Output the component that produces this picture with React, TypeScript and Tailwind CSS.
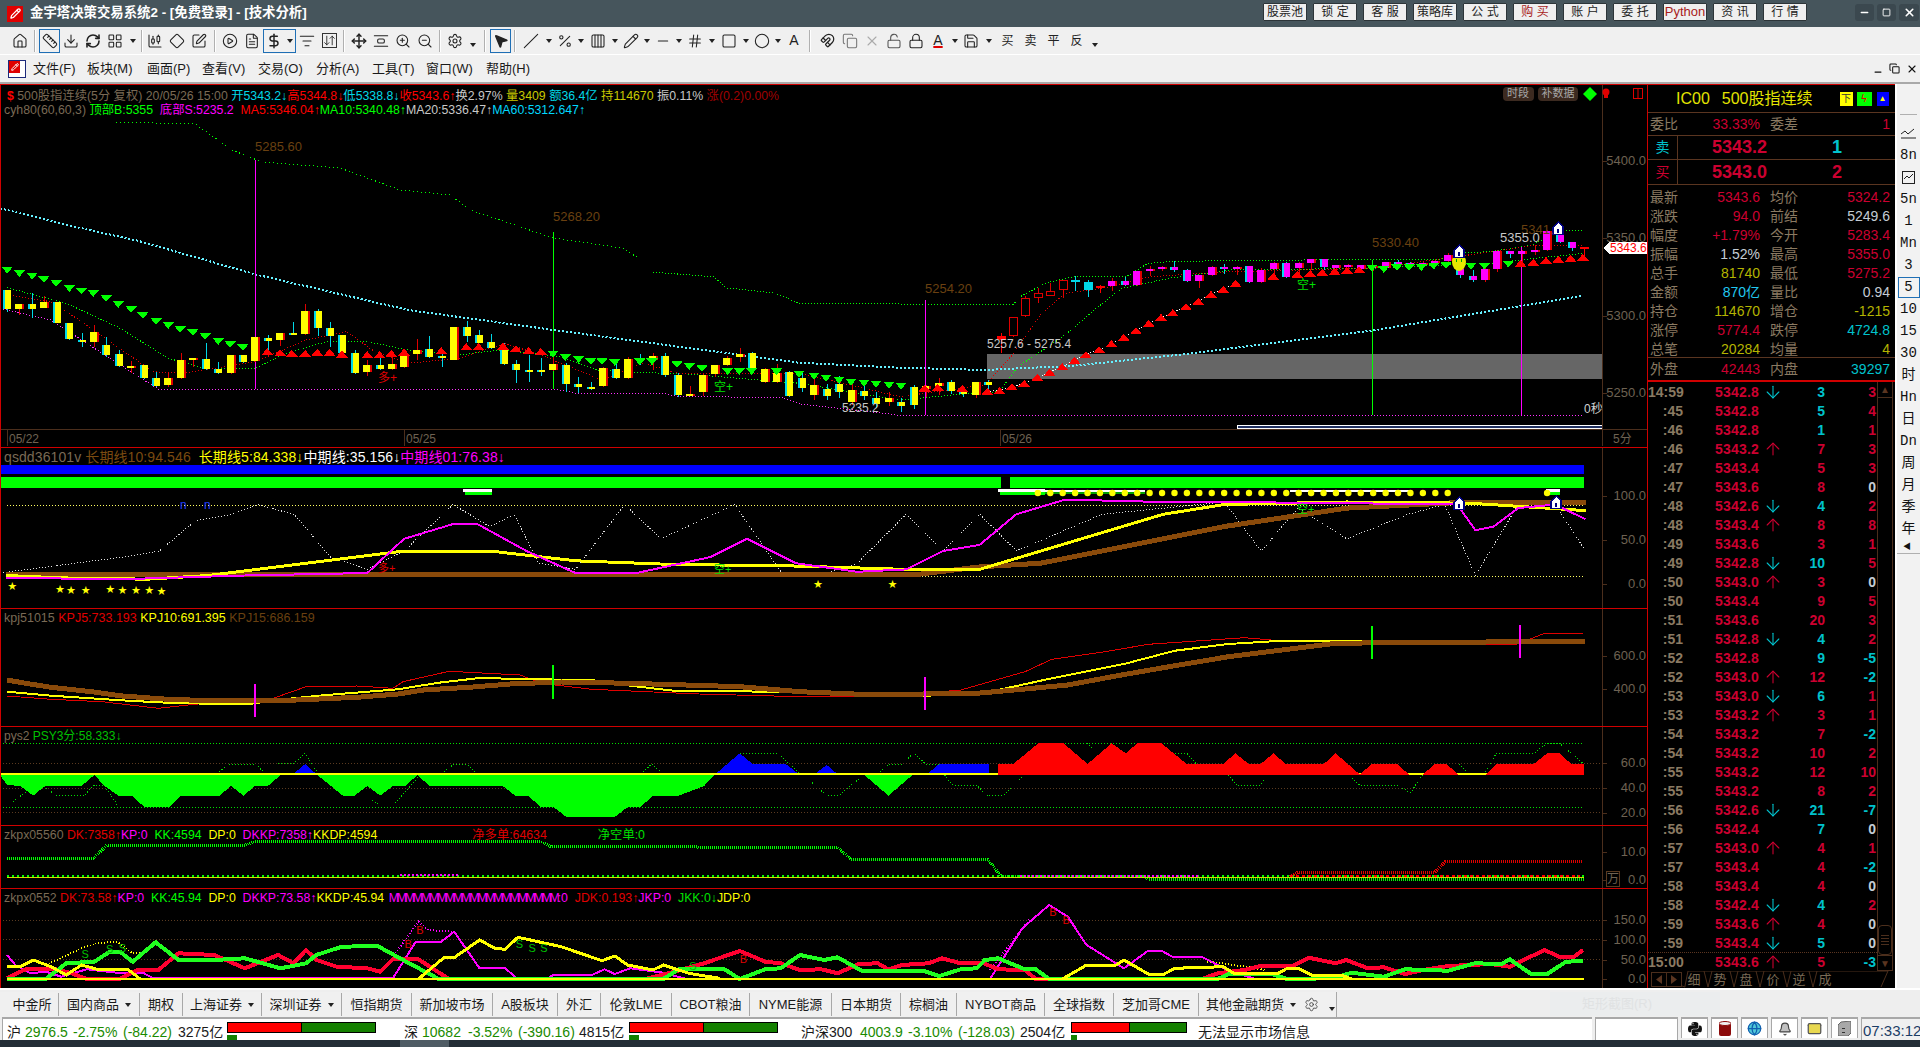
import React from "react";
import {
  House, Ruler, Download, RefreshCw, LayoutGrid, CandlestickChart, SquarePen, CirclePlay, FileText, DollarSign,
  ListFilter, ArrowDownUp, Move, ZoomIn, ZoomOut, Settings, Slash, Percent, Columns4, Hash, Square, Circle, Magnet,
  Copy, X, LockOpen, Lock, Save, Minus, ArrowUp, ArrowDown, MousePointer2, Pencil, AlignVerticalSpaceAround, Diamond, Bell, Mail, Globe,
} from "lucide-react";
import { FaPython } from "react-icons/fa";

type P = number[][];
const pl = (p: P) => p.map((a) => `${a[0].toFixed(1)},${a[1].toFixed(1)}`).join(" ");
const z8 = (a: P): P => a.map(([x, y]) => [x / 1.96, 240 + y / 3]);
const z9 = (a: P): P => a.map(([x, y]) => [900 + x / 2.119, 200 + y / 3]);
const z10 = (a: P): P => a.map(([x, y]) => [x / 1.96, 600 + y / 3]);
const z11 = (a: P): P => a.map(([x, y]) => [800 + x / 1.867, 600 + y / 3]);
const ov = (a: P): P => a.map(([x, y]) => [x / 0.8167, y / 0.8167]);
const cx = (i: number) => 7 + 12.42 * i;

type C = [number, number, number, number, string];
const c8: C[] = [
  [150,207,150,215,"c"],[192,207,192,225,"r"],[192,207,160,235,"c"],[186,203,168,205,"r"],[186,248,186,250,"c"],[249,297,249,300,"c"],[300,305,278,322,"c"],[276,306,255,322,"r"],
  [315,344,292,352,"c"],[342,378,330,382,"c"],[378,381,362,398,"r"],[375,414,375,418,"c"],[414,437,396,440,"c"],[414,435,395,440,"r"],[360,414,340,416,"r"],[354,360,354,380,"r"],
  [357,387,308,390,"c"],[387,399,366,402,"c"],[345,399,345,402,"r"],[345,366,345,370,"c"],[291,362,291,365,"r"],[294,303,285,330,"c"],[279,300,279,318,"r"],[279,284,246,285,"c"],
  [213,282,192,285,"r"],[213,264,207,288,"c"],[264,288,246,320,"c"],[285,339,285,345,"c"],[339,399,330,402,"c"],[375,396,360,408,"r"],[375,387,350,390,"c"],[372,387,345,390,"r"],
  [342,381,330,385,"r"],[330,342,296,360,"r"],[327,351,288,355,"c"],[348,354,330,380,"c"],[261,360,261,360,"r"],[261,288,243,306,"c"],[285,309,270,310,"c"],[306,324,282,326,"c"],
  [324,372,310,375,"c"],[372,390,360,428,"c"],[390,393,345,425,"c"],[390,396,354,408,"c"],[372,390,336,392,"r"],[375,432,370,455,"c"],[432,441,410,460,"c"],[441,445,425,450,"c"],
  [384,438,380,440,"r"],[387,414,365,416,"c"],[357,414,350,416,"r"],[357,363,342,375,"c"],[348,360,338,390,"r"],[348,405,338,412,"c"],[405,465,400,470,"c"],[462,465,438,468,"r"],
  [405,456,400,468,"r"],[375,402,375,410,"r"],[354,375,348,378,"r"],[342,351,324,365,"r"],[339,390,335,395,"c"],[387,426,385,430,"r"],[399,426,372,430,"r"],[396,468,393,472,"c"],
];
const cMid: number[][] = [[378,388,372,392],[385,395,378,400],[389,396,384,400],[384,392,376,398],[390,402,384,405],[391,396,386,400],[398,404,392,408],[398,402,392,406],[402,406,398,412]];
const c9: C[] = [
  [560,615,555,628,"c"],[558,567,555,590,"r"],[549,558,535,585,"r"],[546,573,540,582,"c"],[573,582,560,590,"c"],[546,585,546,595,"r"],[546,555,540,570,"c"],
  [408,420,400,458,"R"],[351,407,350,410,"h"],[295,347,287,352,"h"],[280,293,265,310,"h"],[274,285,248,285,"h"],[240,268,240,293,"h"],[240,245,228,272,"C"],[246,269,240,290,"C"],[258,262,255,280,"R"],
  [243,258,235,272,"m"],[243,255,230,258,"n"],[213,255,213,258,"m"],[207,213,197,228,"m"],[201,207,198,212,"m"],[201,210,183,215,"n"],[210,243,207,245,"n"],[225,243,225,265,"m"],[201,225,198,228,"m"],[201,207,192,222,"n"],[201,207,198,225,"m"],
  [198,246,198,250,"n"],[210,245,205,250,"m"],[189,207,185,225,"m"],[189,231,185,235,"n"],[189,204,185,225,"m"],[177,189,177,210,"m"],[177,201,177,210,"n"],[195,204,195,222,"m"],[195,201,192,220,"m"],[195,207,195,215,"m"],[198,204,196,212,"m"],
  [186,204,186,210,"m"],[186,190,180,205,"n"],[189,192,186,205,"n"],[189,192,186,200,"m"],[183,189,180,200,"m"],[165,183,160,190,"m"],[207,225,150,233,"n"],[228,240,210,245,"n"],[207,240,192,245,"m"],[153,207,153,215,"m"],
  [153,162,153,175,"n"],[153,162,150,185,"m"],[150,153,135,165,"m"],[93,150,90,152,"m"],[105,126,80,130,"n"],[126,144,126,152,"n"],[142,145,140,168,"R"],
];

function Candle({ i, t, b, wt, wb, k }: { i: number; t: number; b: number; wt: number; wb: number; k: string }) {
  const x = Math.round(cx(i));
  const fill: Record<string, string> = { c: "#ffff00", r: "#ffff00", h: "#000", R: "#ff0000", C: "#00d8e8", m: "#ff00ff", n: "#ff00ff" };
  const edge: Record<string, string> = { c: "#00d8e8", r: "#e00000", h: "#e00000", R: "#ff0000", C: "#00d8e8", m: "#e00000", n: "#00d8e8" };
  const h = Math.max(2, b - t);
  return (
    <g>
      <line x1={x} x2={x} y1={wt} y2={wb} stroke={edge[k]} />
      <rect x={x - 4} y={t} width={8} height={h} fill={fill[k]} />
      {k === "h" ? <rect x={x - 4} y={t} width={8} height={h} fill="#000" stroke="#e00000" /> : <rect x={k === "c" || k === "n" ? x - 4 : x + 3} y={t} width={1.5} height={h} fill={edge[k]} />}
    </g>
  );
}

const Dot = ({ p, c, w = 1, d = "1 2" }: { p: P; c: string; w?: number; d?: string }) => <polyline points={pl(p)} fill="none" stroke={c} strokeWidth={w} strokeDasharray={d} />;
const Line = ({ p, c, w = 1 }: { p: P; c: string; w?: number }) => <polyline points={pl(p)} fill="none" stroke={c} strokeWidth={w} />;
const Poly = ({ p, c }: { p: P; c: string }) => <polygon points={pl(p)} fill={c} />;
const Lbl = ({ x, y, t, c = "#6e6252", s = 13, a = "start" }: { x: number; y: number; t: string; c?: string; s?: number; a?: "start" | "middle" | "end" }) => (
  <text x={x} y={y + s * 0.3} fill={c} fontSize={s} textAnchor={a}>{t}</text>
);
const Tri = ({ x, y, c, up }: { x: number; y: number; c: string; up?: boolean }) => (
  <polygon points={up ? `${x - 6},${y + 3.5} ${x + 6},${y + 3.5} ${x},${y - 3.5}` : `${x - 6},${y - 3.5} ${x + 6},${y - 3.5} ${x},${y + 3.5}`} fill={c} />
);
const House2 = ({ x, y }: { x: number; y: number }) => (
  <g>
    <polygon points={`${x},${y - 8} ${x + 6},${y - 2} ${x + 6},${y + 6} ${x - 6},${y + 6} ${x - 6},${y - 2}`} fill="#000080" />
    <polygon points={`${x},${y - 6} ${x + 4},${y - 2} ${x + 4},${y + 5} ${x - 4},${y + 5} ${x - 4},${y - 2}`} fill="#ffffff" />
    <rect x={x - 1} y={y} width={2} height={4} fill="#000080" />
  </g>
);
const Axis = ({ top, h, ticks }: { top: number; h: number; ticks: [string, number][] }) => (
  <g>
    <line x1={1602.5} x2={1602.5} y1={top} y2={top + h} stroke="#4b2e1c" />
    {ticks.map(([t, y]) => (
      <g key={t}>
        <line x1={1602} x2={1607} y1={y} y2={y} stroke="#4b2e1c" />
        <Lbl x={1646} y={y} t={t} a="end" />
      </g>
    ))}
  </g>
);

const g8 = [[14,90],[38,100],[63,108],[86,118],[110,130],[136,145],[160,153],[183,160],[208,175],[232,193],[257,208],[280,226],[306,244],[330,256],[353,268],[378,277],[402,289],[428,304],[451,313],[476,322],[1084,342],[1108,352],[1134,358],[1158,364],[1180,364],[1205,367],[1254,365],[1278,365],[1327,373],[1351,379],[1376,385],[1426,394],[1449,394],[1473,394],[1522,395],[1566,402]];
const r8 = [[524,335],[549,338],[572,340],[598,340],[622,337],[646,337],[670,342],[720,344],[744,344],[767,340],[792,336],[865,332],[914,320],[938,320],[986,318],[1011,326],[1036,332],[1060,334]];
const gMid = [[814,376],[826,378],[839,380],[851,382],[864,383],[876,384],[889,385],[901,386]];
const r9 = [[52,564],[80,562],[132,565],[185,574],[211,572],[237,560],[263,550],[291,532],[317,517],[344,500],[370,481],[394,464],[422,449],[448,431],[474,412],[500,392],[527,370],[553,352],[578,338],[606,320],[632,304],[659,283],[685,268],[711,250],[791,229],[842,223],[869,220],[895,217],[921,214],[947,211],[973,209]];
const g9 = [[1000,204],[1025,208],[1053,202],[1079,202],[1105,202],[1131,198],[1157,196],[1210,198],[1238,198],[1289,192]];
const r9b = [[1315,190],[1342,187],[1369,181],[1395,178],[1421,175],[1447,172]];

function MainChart() {
  return (
    <svg width={1646} height={362} viewBox="1 85 1646 362" className="block" shapeRendering="crispEdges">
      <rect x={987} y={354} width={615} height={25} fill="#666666" />
      <Dot p={[...ov([[0,170],[60,185],[110,196]]), ...z8([[265,0],[500,103],[800,210],[1085,270],[1565,368]]), ...z9([[0,503],[180,510],[370,497],[600,463],[1000,392],[1447,287]])]} c="#66f0ff" w={2} d="2 2" />
      <Dot p={[[116,122],[195,124],[232,150],[262,162],[340,168],[400,190],[450,195],[470,210],[500,220],[553,238],[622,248],[640,259]]} c="#00ff00" d="1 3" />
      <Dot p={[[653,272],[714,277],[727,288],[775,293],[798,303],[900,304],...z9([[240,313],[255,290],[310,248],[370,230],[480,230],[525,190],[580,184],[1000,178],[1140,180],[1180,160],[1250,155],[1340,135],[1400,92],[1447,92]])]} c="#00ff00" />
      <Dot p={[...z8([[14,143],[130,190],[230,260],[330,355],[400,385],[500,385],[560,340],[640,305],[720,305],[800,330],[900,345],[980,330],[1100,350],[1170,390],[1250,398],[1330,400],[1568,430]]), ...z9([[0,600],[150,580],[210,575],[250,500],[345,410],[420,320],[470,265],[570,235],[700,210],[1000,205],[1150,195],[1250,190],[1447,160]])]} c="#00ff00" />
      <Dot p={[...z8([[14,165],[100,185],[150,235],[230,320],[300,395],[360,400],[500,365],[600,300],[680,275],[730,330],[800,370],[900,355],[990,310],[1060,345],[1180,420],[1260,370],[1330,400],[1400,400],[1568,400]]), ...z9([[0,590],[180,555],[235,470],[300,340],[350,280],[430,265],[530,230],[700,215],[1000,205],[1180,170],[1350,135],[1447,135]])]} c="#e00000" />
      <Dot p={[...z8([[0,205],[100,240],[130,270],[200,340],[310,447],[1085,447],[1130,460],[1300,460],[1330,470],[1530,472],[1568,492]]), ...z9([[0,646],[1447,646]])]} c="#ff30ff" />
      <line x1={255} x2={255} y1={160} y2={389} stroke="#ff00ff" />
      <line x1={553} x2={553} y1={232} y2={389} stroke="#00ff00" />
      <line x1={925} x2={925} y1={300} y2={415} stroke="#ff00ff" />
      <line x1={1372} x2={1372} y1={260} y2={415} stroke="#00ff00" />
      <line x1={1521} x2={1521} y1={247} y2={415} stroke="#ff00ff" />
      {c8.map((c, i) => <Candle key={i} i={i} t={240 + c[0] / 3} b={240 + c[1] / 3} wt={240 + c[2] / 3} wb={240 + c[3] / 3} k={c[4]} />)}
      {cMid.map((c, i) => <Candle key={i} i={64 + i} t={c[0]} b={c[1]} wt={c[2]} wb={c[3]} k={i % 3 === 1 ? "r" : "c"} />)}
      {c9.map((c, i) => <Candle key={i} i={73 + i} t={200 + c[0] / 3} b={200 + c[1] / 3} wt={200 + c[2] / 3} wb={200 + c[3] / 3} k={c[4]} />)}
      <Dot p={z9(r9.slice(3, 24))} c="#ffffff" />
      {z8(g8).map((p, i) => <Tri key={i} x={p[0]} y={p[1]} c="#00ff00" />)}
      {gMid.map((p, i) => <Tri key={i} x={p[0]} y={p[1]} c="#00ff00" />)}
      {z8(r8).map((p, i) => <Tri key={i} x={p[0]} y={p[1]} c="#ff0000" up />)}
      {z9(r9).map((p, i) => <Tri key={i} x={p[0]} y={p[1]} c="#ff0000" up />)}
      {z9(g9).map((p, i) => <Tri key={i} x={p[0]} y={p[1]} c="#00ff00" />)}
      {z9(r9b).map((p, i) => <Tri key={i} x={p[0]} y={p[1]} c="#ff0000" up />)}
      <ellipse cx={1459} cy={262} rx={7} ry={9} fill="#e8e800" shapeRendering="auto" />
      <rect x={1456} y={259} width={1} height={3} fill="#00a000" /><rect x={1461} y={259} width={1} height={3} fill="#00a000" />
      <House2 x={1459} y={252} /><House2 x={1558} y={229} />
      <g shapeRendering="auto">
        <Lbl x={255} y={147} t="5285.60" c="#6a4010" s={13} />
        <Lbl x={553} y={217} t="5268.20" c="#6a4010" s={13} />
        <Lbl x={925} y={289} t="5254.20" c="#6a4010" s={13} />
        <Lbl x={1372} y={243} t="5330.40" c="#6a4010" s={13} />
        <Lbl x={1521} y={230} t="5341." c="#6a4010" s={13} />
        <Lbl x={1500} y={238} t="5355.0" c="#c8c8c8" s={13} />
        <Lbl x={987} y={344} t="5257.6 - 5275.4" c="#c8c8c8" s={12} />
        <Lbl x={842} y={408} t="5235.2" c="#c8c8c8" s={12} />
        <Lbl x={1584} y={409} t="0秒" c="#d0d0d0" s={12} />
        <Lbl x={378} y={378} t="多+" c="#e00000" s={12} />
        <Lbl x={714} y={387} t="空+" c="#00e000" s={12} />
        <Lbl x={1297} y={285} t="空+" c="#00e000" s={12} />
      </g>
      <rect x={1237} y={425} width={365} height={3} fill="#203060" stroke="#ffffff" />
      <Axis top={85} h={361} ticks={[["5400.0", 161], ["5350.0", 238], ["5300.0", 316], ["5250.0", 393]]} />
      <polygon points="1603,248 1609,242 1647,242 1647,254 1609,254" fill="#ffffff" />
      <g shapeRendering="auto">
        <Lbl x={1610} y={248} t="5343.6" c="#ff0000" s={12} />
        <rect x={1503} y={87} width={31} height={14} rx={4} fill="#3c2a20" />
        <Lbl x={1518} y={94} t="时段" c="#a8a8a8" s={11} a="middle" />
        <rect x={1538} y={87} width={40} height={14} rx={4} fill="#3c2a20" />
        <Lbl x={1558} y={94} t="补数据" c="#a8a8a8" s={11} a="middle" />
        <polygon points="1590,87 1597,94 1590,101 1583,94" fill="#00ff00" />
        <circle cx={1606} cy={92} r={3.5} fill="#e00000" />
        <rect x={1604} y={95} width={4} height={3} fill="#e00000" />
        <rect x={1633.5} y={88.5} width={9} height={10} fill="none" stroke="#e00000" />
        <line x1={1638} x2={1638} y1={88} y2={98} stroke="#e00000" />
      </g>
      <line x1={0} x2={1647} y1={429.5} y2={429.5} stroke="#4b2e1c" />
      <line x1={7.5} x2={7.5} y1={430} y2={446} stroke="#4b2e1c" />
      <line x1={404.5} x2={404.5} y1={430} y2={446} stroke="#4b2e1c" />
      <line x1={1000.5} x2={1000.5} y1={430} y2={446} stroke="#4b2e1c" />
      <g shapeRendering="auto">
        <Lbl x={9} y={439} t="05/22" s={12} />
        <Lbl x={406} y={439} t="05/25" s={12} />
        <Lbl x={1002} y={439} t="05/26" s={12} />
        <Lbl x={1613} y={439} t="5分" s={12} />
      </g>
    </svg>
  );
}

function Pane2() {
  const dotsFull = [83,84,85,86,87,88,89,90,91,92,93,94,95,96,97,98,99,100,101,102,103,104,105,106,107,108,109,110,111,112,113,114,115,116,124];
  return (
    <svg width={1646} height={160} viewBox="1 448 1646 160" className="block" shapeRendering="crispEdges">
      <rect x={0} y={465} width={1584} height={9} fill="#0000ff" />
      <rect x={0} y={477} width={1001} height={11} fill="#00ff00" />
      <rect x={1010} y={477} width={574} height={11} fill="#00ff00" />
      <rect x={463} y={489} width={29} height={3} fill="#ffffff" /><rect x={465} y={492} width={27} height={3} fill="#00ff00" />
      <rect x={998} y={489} width={47} height={3} fill="#ffffff" /><rect x={1000} y={492} width={45} height={3} fill="#00ff00" />
      <rect x={1045} y={490} width={100} height={2} fill="#ffffff" /><rect x={1045} y={492} width={100} height={2} fill="#00a000" />
      <rect x={1290} y={490} width={120} height={2} fill="#ffffff" />
      <rect x={1546} y={489} width={14} height={3} fill="#ffffff" /><rect x={1546} y={492} width={14} height={3} fill="#00ff00" />
      <g shapeRendering="auto">{dotsFull.map((i) => <circle key={i} cx={cx(i)} cy={493} r={3.2} fill="#ffff00" />)}</g>
      <Dot p={[[7,505.5],[1584,505.5]]} c="#ffff60" />
      <Dot p={[[7,576.5],[1584,576.5]]} c="#ffff60" />
      <Dot p={ov([[0,468],[100,455],[130,450],[160,425],[190,420],[210,412],[240,420],[270,455],[300,465],[330,450],[370,412],[400,430],[420,420],[440,460],[470,465],[510,412],[540,440],[600,412],[640,470],[670,470],[700,460],[740,420],[770,450],[800,420],[830,450],[900,420],[1000,410],[1030,450],[1060,415],[1100,440],[1150,420],[1180,412],[1205,470],[1240,412],[1270,412],[1295,450]])} c="#e0e0e0" />
      <Line p={ov([[5,469],[750,469],[800,463],[850,460],[900,450],[1000,430],[1100,415],[1200,410],[1295,410]])} c="#8a4a0a" w={5} />
      <Line p={ov([[5,470],[50,472],[120,473],[170,470],[250,460],[330,450],[400,450],[470,458],[550,461],[640,462],[740,465],[800,465],[850,450],[950,420],[1000,412],[1100,410],[1200,411],[1295,417]])} c="#ffff00" w={3} />
      <Line p={ov([[5,472],[100,473],[200,470],[300,468],[330,440],[370,428],[390,428],[430,450],[470,468],[520,468],[580,455],[610,440],[650,460],[700,467],[740,465],[770,450],[800,445],[830,420],[870,408],[950,410],[1000,410],[1100,411],[1190,412],[1205,433],[1220,430],[1240,415],[1270,412],[1295,424]])} c="#ff00ff" w={2} />
      <House2 x={1459} y={504} /><House2 x={1556} y={503} />
      <g shapeRendering="auto">
        {ov([[10,479],[49,481],[58,482],[70,482],[90,481],[100,482],[111,482],[122,482],[132,483],[668,477],[729,477]]).map((p, i) => <Lbl key={i} x={p[0]} y={p[1]} t="★" c="#ffff00" s={9} a="middle" />)}
        <Lbl x={180} y={505} t="n" c="#2040ff" s={12} />
        <Lbl x={204} y={505} t="n" c="#2040ff" s={12} />
        <Lbl x={378} y={569} t="多+" c="#e00000" s={11} />
        <Lbl x={714} y={570} t="空+" c="#00e000" s={11} />
        <Lbl x={1297} y={510} t="空+" c="#00e000" s={11} />
      </g>
      <Axis top={447} h={161} ticks={[["100.0", 496], ["50.0", 540], ["0.0", 584]]} />
    </svg>
  );
}

function Pane3() {
  return (
    <svg width={1646} height={117} viewBox="1 609 1646 117" className="block" shapeRendering="crispEdges">
      <Line p={[...z10([[14,288],[100,298],[200,305],[310,325],[400,310],[530,298],[600,260],[700,258],[770,265],[790,245],[880,214],[1020,225],[1060,250],[1160,268],[1370,282],[1568,290]]), ...z11([[130,290],[170,288],[300,270],[420,215],[470,178],[570,155],[650,133],[830,113],[880,120],[1100,125],[1200,135],[1340,132],[1390,100],[1462,100]])]} c="#e00000" />
      <Line p={[...z10([[14,275],[100,287],[250,302],[350,310],[490,312],[540,300],[640,285],[780,268],[860,248],[940,234],[1050,238],[1160,240],[1240,258],[1320,272],[1568,276]]), ...z11([[240,287],[370,270],[470,235],[610,190],[700,152],[800,132],[900,122],[1115,122],[1375,130]])]} c="#ffff00" w={2} />
      <Line p={[...z10([[14,240],[50,250],[100,262],[180,275],[240,288],[330,298],[430,303],[550,302],[700,292],[780,282],[830,270],[920,262],[1000,252],[1100,246],[1180,248],[1300,253],[1450,260],[1568,275]]), ...z11([[100,282],[230,282],[330,280],[400,270],[500,255],[600,225],[700,197],[800,170],[900,150],[1000,130],[1100,128],[1465,124]])]} c="#8a4a0a" w={5} />
      <line x1={255} x2={255} y1={684} y2={717} stroke="#ff00ff" strokeWidth={2} />
      <line x1={553} x2={553} y1={665} y2={699} stroke="#00ff00" strokeWidth={2} />
      <line x1={925} x2={925} y1={677} y2={710} stroke="#ff00ff" strokeWidth={2} />
      <line x1={1372} x2={1372} y1={626} y2={659} stroke="#00ff00" strokeWidth={2} />
      <line x1={1520} x2={1520} y1={625} y2={658} stroke="#ff00ff" strokeWidth={2} />
      <Axis top={608} h={118} ticks={[["600.0", 656], ["400.0", 689]]} />
    </svg>
  );
}

function Pane4() {
  return (
    <svg width={1646} height={98} viewBox="1 727 1646 98" className="block" shapeRendering="crispEdges">
      {[763, 788, 812].map((y) => <Dot key={y} p={[[0,y],[1602,y]]} c="#5a3a20" />)}
      <Dot p={[[0,743],[1584,743]]} c="#00e000" />
      <Dot p={[[0,807],[1584,807]]} c="#00e000" />
      {[
        z10([[25,605],[65,560],[88,560],[110,587],[165,587],[185,555],[205,558],[230,615]]),
        z10([[430,515],[450,492],[500,492],[520,520]]),
        z10([[545,492],[575,490],[598,460],[625,525]]),
        z10([[730,600],[740,612]]),
        z10([[775,610],[820,530]]),
        z10([[870,515],[890,492],[915,492],[930,515]]),
        z10([[1260,515],[1278,492],[1295,515]]),
        z10([[1450,460],[1525,460],[1568,520]]),
        z11([[10,530],[50,587],[72,587],[115,530]]),
        z11([[150,515],[165,492],[190,492],[212,460],[235,492],[260,492]]),
        z11([[270,525],[285,556],[330,556],[350,587],[380,587],[415,530]]),
        z11([[535,430],[545,445]]),
        z11([[695,460],[722,460],[740,492]]),
        z11([[800,525],[815,556],[860,556],[870,530]]),
        z11([[1030,535],[1045,556],[1115,556],[1140,578],[1162,525]]),
        z11([[1230,492],[1245,515]]),
        z11([[1280,515],[1300,460],[1370,460],[1395,430],[1418,430],[1463,492]]),
      ].map((p, i) => <Dot key={i} p={p} c="#00e000" />)}
      <Poly c="#00ff00" p={z10([[0,525],[14,555],[40,558],[65,587],[88,558],[160,558],[185,525],[205,558],[232,587],[258,587],[283,621],[333,621],[355,587],[430,587],[453,558],[477,587],[500,558],[525,558],[550,525]])} />
      <Poly c="#0000ff" p={z10([[550,525],[575,522],[598,492],[622,525]])} />
      <Poly c="#00ff00" p={z10([[622,525],[672,587],[695,587],[720,558],[745,587],[770,558],[795,558],[818,525],[842,558],[985,558],[1010,587],[1035,587],[1060,621],[1085,621],[1110,651],[1205,651],[1230,621],[1255,621],[1280,587],[1330,587],[1380,558],[1400,525]])} />
      <Poly c="#0000ff" p={z10([[1400,525],[1450,460],[1475,492],[1540,492],[1568,525]])} />
      <Poly c="#0000ff" p={z11([[25,525],[50,495],[72,525]])} />
      <Poly c="#00ff00" p={z11([[118,522],[212,522],[165,587]])} />
      <Poly c="#0000ff" p={z11([[235,525],[260,492],[352,492],[352,525]])} />
      <line x1={0} x2={1584} y1={774} y2={774} stroke="#ffff00" strokeWidth={2} />
      <Poly c="#ff0000" p={z11([[370,525],[370,492],[398,492],[445,430],[492,430],[537,492],[582,430],[608,460],[630,430],[675,430],[722,492],[790,492],[813,460],[838,492],[860,492],[884,460],[907,492],[978,492],[1000,460],[1045,523],[1068,492],[1115,492],[1138,525]])} />
      <Poly c="#ff0000" p={z11([[1162,525],[1185,492],[1207,492],[1230,525]])} />
      <Poly c="#ff0000" p={z11([[1280,525],[1300,492],[1370,492],[1395,460],[1418,460],[1440,492],[1463,492],[1463,525]])} />
      <Axis top={726} h={99} ticks={[["60.0", 763], ["40.0", 788], ["20.0", 813]]} />
    </svg>
  );
}

function Pane5() {
  return (
    <svg width={1646} height={62} viewBox="1 826 1646 62" className="block" shapeRendering="crispEdges">
      <Dot p={[...z10([[14,775],[183,775],[210,735],[480,735],[500,725],[1060,725],[1080,740],[1365,740],[1370,743],[1568,743]]), ...z11([[70,742],[95,777],[350,777],[375,828],[640,830],[650,838],[1465,838]])]} c="#00ff00" w={3} d="1 1" />
      <Dot p={z11([[915,830],[930,817],[1185,817],[1205,785],[1462,785]])} c="#e00000" w={3} d="1 1" />
      <Line p={[[7,877],[1584,877]]} c="#d8d800" />
      <Dot p={[[7,876],[1584,876]]} c="#00ff00" w={2} d="2 3" />
      <Dot p={[[400,875],[460,875]]} c="#ff00ff" w={2} d="2 2" />
      <Dot p={[[1020,876],[1200,876]]} c="#ff00ff" w={2} d="2 2" />
      <Dot p={[[1290,876],[1580,876]]} c="#ff0000" w={2} d="3 3" />
      <Axis top={825} h={63} ticks={[["10.0", 852], ["0.0", 880]]} />
      <rect x={1606.5} y={871.5} width={13} height={15} fill="none" stroke="#5a3a20" />
      <g shapeRendering="auto"><Lbl x={1613} y={879} t="万" s={12} a="middle" /></g>
    </svg>
  );
}

function Pane6() {
  return (
    <svg width={1646} height={99} viewBox="1 889 1646 99" className="block" shapeRendering="crispEdges">
      {[920, 939, 959].map((y) => <Dot key={y} p={[[0,y],[1602,y]]} c="#5a3a20" />)}
      <Dot p={z10([[775,1060],[820,965],[840,990],[890,995]])} c="#ff00ff" w={2} d="1 2" />
      <Dot p={z11([[355,1110],[430,955]])} c="#ff00ff" w={2} d="1 2" />
      <Dot p={z10([[90,1095],[160,1045],[190,1030],[230,1025],[260,1060],[280,1060]])} c="#ffff00" w={2} d="1 2" />
      <Dot p={z11([[760,1085],[790,1090],[870,1110]])} c="#ffff00" w={2} d="1 2" />
      <Line p={z10([[14,1065],[30,1095],[60,1120],[90,1115],[120,1130],[170,1108],[240,1120],[280,1118],[300,1135],[770,1135],[815,1025],[865,1025],[890,995],[940,1105],[990,1105],[1015,1137],[1070,1137],[1085,1125],[1160,1125],[1185,1108],[1205,1122],[1235,1105],[1300,1118],[1345,1137],[1568,1137]])} c="#ff00ff" w={2} />
      <Line p={z11([[355,1137],[415,985],[465,915],[500,950],[535,1035],[605,1105],[650,1052],[675,1052],[695,1070],[750,1070],[800,1112],[850,1137],[900,1137]])} c="#ff00ff" w={2} />
      <Line p={[...z10([[14,1135],[50,1108],[110,1108],[140,1120],[170,1137],[235,1137],[270,1110],[310,1110],[350,1060],[420,1065],[480,1105],[545,1065],[575,1090],[600,1050],[620,1080],[660,1100],[720,1105],[745,1115],[770,1078],[820,1078],[880,1137],[1265,1137],[1310,1120],[1380,1090],[1450,1053],[1500,1085],[1530,1090],[1568,1110]]), ...z11([[40,1108],[70,1120],[110,1092],[145,1090],[165,1108],[190,1095],[240,1090],[265,1075],[300,1090],[340,1088],[370,1108],[420,1110],[440,1137],[750,1137],[780,1120],[830,1110],[860,1098],[920,1098],[950,1073],[1000,1090],[1020,1080],[1060,1105],[1090,1102],[1130,1122],[1170,1108],[1210,1098],[1290,1092],[1325,1100],[1390,1050],[1420,1072],[1445,1070],[1462,1050]])]} c="#ff0030" w={4} />
      <Line p={[...z10([[14,1137],[90,1137],[130,1090],[185,1085],[215,1055],[235,1055],[260,1085],[305,1027],[350,1080],[420,1080],[480,1075],[550,1105],[600,1090],[620,1065],[670,1040],[740,1038],[790,1080],[860,1137],[1300,1137],[1330,1108],[1420,1108],[1450,1137],[1500,1108],[1530,1105],[1568,1065]]), ...z11([[45,1080],[70,1072],[115,1112],[230,1112],[260,1128],[300,1108],[330,1105],[345,1080],[370,1075],[420,1108],[440,1108],[465,1137],[780,1137],[800,1122],[880,1122],[910,1137],[960,1137],[975,1130],[1005,1130],[1030,1118],[1090,1130],[1130,1108],[1210,1112],[1260,1090],[1310,1092],[1325,1078],[1365,1122],[1395,1122],[1430,1085],[1462,1083]])]} c="#20ff20" w={4} />
      <Line p={z10([[14,1100],[40,1100],[65,1080],[100,1100],[130,1125],[160,1095],[190,1108],[250,1108],[275,1137]])} c="#ffff00" w={3} />
      <Line p={z10([[820,1137],[870,1073],[890,1073],[940,1020],[970,1045],[990,1048],[1015,1012],[1100,1040],[1180,1082],[1205,1068],[1230,1095],[1280,1110],[1300,1095],[1350,1120],[1410,1135]])} c="#ffff00" w={3} />
      <Line p={z11([[490,1137],[535,1095],[590,1095],[605,1080],[650,1122],[680,1122],[700,1105],[790,1100],[810,1120],[890,1122],[910,1105],[930,1105],[955,1125],[1010,1125],[1030,1137]])} c="#ffff00" w={3} />
      <line x1={7} x2={1584} y1={979} y2={979} stroke="#ffff00" strokeWidth={2} />
      <g shapeRendering="auto">
        {[...z10([[823,992],[800,1033],[1457,1078]]), ...z11([[472,938],[497,962]])].map((p, i) => <Lbl key={i} x={p[0]} y={p[1]} t="B" c="#e00000" s={11} a="middle" />)}
        {z10([[167,1065],[215,1048],[240,1045],[1018,1033],[1043,1045],[1066,1047],[1358,1100]]).map((p, i) => <Lbl key={i} x={p[0]} y={p[1]} t="S" c="#00c000" s={11} a="middle" />)}
      </g>
      <Axis top={888} h={100} ticks={[["150.0", 920], ["100.0", 940], ["50.0", 960], ["0.0", 979]]} />
    </svg>
  );
}

const Caret = () => <svg width={6} height={4} viewBox="0 0 6 4"><polygon points="0,0 6,0 3,4" fill="#222" /></svg>;
function T({ w, children, active }: { w: string; children?: React.ReactNode; active?: boolean }) {
  return <div className={`${w} h-[24px] flex items-center justify-center shrink-0 text-[#222] ${active ? "border border-[#1f6fb5]" : ""}`}>{children}</div>;
}
const Sep = ({ w }: { w: string }) => <div className={`${w} h-[22px] flex justify-center shrink-0`}><div className="w-[1px] h-full bg-[#b0b0b0] border-r border-white box-content" /></div>;
const I = { size: 16, strokeWidth: 1.6 };

function Toolbar() {
  return (
    <div className="h-[28px] bg-[#f0f0f0] border-b border-white flex items-center pl-[9px] shrink-0">
      <T w="w-[22px]"><House {...I} /></T>
      <Sep w="w-[8px]" />
      <T w="w-[21px]" active><Ruler {...I} /></T>
      <T w="w-[22px]"><Download {...I} /></T>
      <T w="w-[22px]"><RefreshCw {...I} strokeWidth={2.4} /></T>
      <T w="w-[22px]"><LayoutGrid {...I} /></T>
      <T w="w-[14px]"><Caret /></T>
      <Sep w="w-[4px]" />
      <T w="w-[22px]"><CandlestickChart {...I} /></T>
      <T w="w-[22px]"><Diamond {...I} /></T>
      <T w="w-[22px]"><SquarePen {...I} /></T>
      <Sep w="w-[9px]" />
      <T w="w-[22px]"><CirclePlay {...I} /></T>
      <T w="w-[22px]"><FileText {...I} /></T>
      <T w="w-[33px]" active><DollarSign {...I} strokeWidth={2.2} /><span className="ml-[5px]"><Caret /></span></T>
      <T w="w-[22px]"><ListFilter {...I} /></T>
      <T w="w-[22px]"><div className="border border-[#333] flex"><ArrowDownUp size={13} strokeWidth={1.6} /></div></T>
      <Sep w="w-[8px]" />
      <T w="w-[22px]"><Move {...I} strokeWidth={2.2} /></T>
      <T w="w-[22px]"><AlignVerticalSpaceAround {...I} /></T>
      <T w="w-[22px]"><ZoomIn {...I} /></T>
      <T w="w-[22px]"><ZoomOut {...I} /></T>
      <Sep w="w-[8px]" />
      <T w="w-[22px]"><Settings {...I} /></T>
      <T w="w-[14px]"><span className="mt-[8px]"><Caret /></span></T>
      <Sep w="w-[10px]" />
      <T w="w-[21px]" active><MousePointer2 size={16} fill="#222" /></T>
      <Sep w="w-[8px]" />
      <T w="w-[24px]"><Slash {...I} /></T>
      <T w="w-[11px]"><Caret /></T>
      <T w="w-[21px]"><Percent {...I} /></T>
      <T w="w-[12px]"><Caret /></T>
      <T w="w-[22px]"><Columns4 {...I} /></T>
      <T w="w-[11px]"><Caret /></T>
      <T w="w-[22px]"><Pencil {...I} /></T>
      <T w="w-[9px]"><Caret /></T>
      <T w="w-[23px]"><Minus {...I} /></T>
      <T w="w-[9px]"><Caret /></T>
      <T w="w-[24px]"><Hash {...I} /></T>
      <T w="w-[10px]"><Caret /></T>
      <T w="w-[24px]"><Square {...I} /></T>
      <T w="w-[10px]"><Caret /></T>
      <T w="w-[22px]"><Circle {...I} /></T>
      <T w="w-[10px]"><Caret /></T>
      <T w="w-[22px]"><span className="text-[14px]">A</span></T>
      <Sep w="w-[10px]" />
      <T w="w-[24px]"><Magnet size={15} strokeWidth={2} /></T>
      <T w="w-[22px]"><Copy {...I} className="text-[#777]" /></T>
      <T w="w-[22px]"><X {...I} className="text-[#aaa]" /></T>
      <T w="w-[22px]"><LockOpen {...I} className="text-[#555]" /></T>
      <T w="w-[22px]"><Lock {...I} /></T>
      <T w="w-[22px]"><span className="text-[14px] underline decoration-[#e00000] decoration-2">A</span></T>
      <T w="w-[11px]"><Caret /></T>
      <T w="w-[22px]"><Save {...I} /></T>
      <T w="w-[14px]"><Caret /></T>
      <T w="w-[23px]"><span className="text-[12px]">买</span></T>
      <T w="w-[23px]"><span className="text-[12px]">卖</span></T>
      <T w="w-[23px]"><span className="text-[12px]">平</span></T>
      <T w="w-[23px]"><span className="text-[12px]">反</span></T>
      <T w="w-[14px]"><span className="mt-[8px]"><Caret /></span></T>
    </div>
  );
}

function TitleBar() {
  const btns = ["股票池", "锁 定", "客 服", "策略库", "公 式", "购 买", "账 户", "委 托", "Python", "资 讯", "行 情"];
  return (
    <div className="h-[27px] bg-[#46555c] flex items-center shrink-0">
      <div className="ml-[7px] w-[16px] h-[16px] bg-[#e00000] flex items-center justify-center"><Pencil size={11} color="#fff" strokeWidth={2.6} /></div>
      <div className="ml-[7px] text-white text-[13.4px] font-semibold whitespace-pre">金宇塔决策交易系统2 - [免费登录] - [技术分析]</div>
      <div className="ml-auto flex gap-[6px] -mt-[3px]">
        {btns.map((b) => (
          <div key={b} className={`w-[44px] h-[18px] bg-[#efefef] border border-[#2c3438] rounded-[1px] flex items-center justify-center whitespace-pre ${b.length === 3 ? "text-[12px]" : "text-[13px]"} ${b === "购 买" || b === "Python" ? "text-[#a81c1c]" : "text-[#222]"}`}>{b}</div>
        ))}
      </div>
      <div className="flex gap-[3px] mr-[1px] ml-[48px] -mt-[3px]">
        <div className="w-[19px] h-[17px] rounded-[3px] bg-[#3b484f] flex items-center justify-center"><Minus size={11} color="#fff" strokeWidth={3} /></div>
        <div className="w-[19px] h-[17px] rounded-[3px] bg-[#3b484f] flex items-center justify-center"><Square size={9} color="#fff" strokeWidth={2.4} /></div>
        <div className="w-[20px] h-[17px] rounded-[3px] bg-[#3b484f] flex items-center justify-center"><X size={13} color="#fff" strokeWidth={3} /></div>
      </div>
    </div>
  );
}

function MenuBar() {
  const items: [string, string][] = [["文件(F)", "w-[54px]"], ["板块(M)", "w-[60px]"], ["画面(P)", "w-[55px]"], ["查看(V)", "w-[56px]"], ["交易(O)", "w-[58px]"], ["分析(A)", "w-[56px]"], ["工具(T)", "w-[54px]"], ["窗口(W)", "w-[60px]"], ["帮助(H)", "w-[50px]"]];
  return (
    <div className="h-[29px] bg-[#f0f0f0] border-b-2 border-[#a9a9a9] flex items-center shrink-0">
      <div className="ml-[8px] w-[18px] h-[18px] bg-white border border-[#1d2a7a] relative mr-[7px]">
        <div className="w-[11px] h-[12px] bg-[#e00000] flex items-center justify-center"><Pencil size={8} color="#fff" strokeWidth={3} /></div>
      </div>
      {items.map(([t, w]) => <div key={t} className={`${w} text-[13px] text-[#1a1a1a] shrink-0`}>{t}</div>)}
      <div className="ml-auto flex items-center gap-[6px] pr-[2px]">
        <Minus size={10} strokeWidth={3} color="#111" className="mt-[6px]" />
        <Copy size={11} strokeWidth={2.2} color="#111" />
        <X size={12} strokeWidth={2.2} color="#111" />
      </div>
    </div>
  );
}

const R = "text-[#cc0030]", Cy = "text-[#00c2cc]", Ol = "text-[#b4b400]", Wh = "text-[#c4ccd4]", Lb = "text-[#8a7a62]";

function QRow({ a, av, ac, b, bv, bc }: { a: string; av: string; ac: string; b: string; bv: string; bc: string }) {
  return (
    <div className="h-[19px] flex items-center pl-[2px] gap-[10px] text-[14px] leading-none">
      <div className="w-[110px] flex justify-between"><span className={Lb}>{a}</span><span className={ac}>{av}</span></div>
      <div className="w-[120px] flex justify-between"><span className={Lb}>{b}</span><span className={bc}>{bv}</span></div>
    </div>
  );
}

type Tk = [string, string, string, string, string, string, string];
const ticks: Tk[] = [
  ["14:59","5342.8","d","3","c","3","r"],[":45","5342.8","","5","c","4","r"],[":46","5342.8","","1","c","1","r"],[":46","5343.2","u","7","r","3","r"],[":47","5343.4","","5","r","3","r"],[":47","5343.6","","8","r","0","w"],
  [":48","5342.6","d","4","c","2","r"],[":48","5343.4","u","8","r","8","r"],[":49","5343.6","","3","r","1","r"],[":49","5342.8","d","10","c","5","r"],[":50","5343.0","u","3","r","0","w"],[":50","5343.4","","9","r","5","r"],
  [":51","5343.6","","20","r","3","r"],[":51","5342.8","d","4","c","2","r"],[":52","5342.8","","9","c","-5","c"],[":52","5343.0","u","12","r","-2","c"],[":53","5343.0","d","6","c","1","r"],[":53","5343.2","u","3","r","1","r"],
  [":54","5343.2","","7","r","-2","c"],[":54","5343.2","","10","r","2","r"],[":55","5343.2","","12","r","10","r"],[":55","5343.2","","8","r","2","r"],[":56","5342.6","d","21","c","-7","c"],[":56","5342.4","","7","c","0","w"],
  [":57","5343.0","u","4","r","1","r"],[":57","5343.4","","4","r","-2","c"],[":58","5343.4","","4","r","0","w"],[":58","5342.4","d","4","c","2","r"],[":59","5343.6","u","4","r","0","w"],[":59","5343.4","d","5","c","0","w"],["15:00","5343.6","u","5","r","-3","c"],
];
const tc: Record<string, string> = { r: R, c: Cy, w: Wh };

function RightPanel() {
  return (
    <div className="w-[248px] shrink-0 border-l border-[#d00000] border-t flex flex-col bg-black">
      <div className="h-[28px] flex items-center border-b border-[#5a3520] relative shrink-0">
        <span className="ml-[28px] text-[16px] text-[#e4e400]">IC00</span>
        <span className="ml-[12px] text-[16px] text-[#e4e400]">500股指连续</span>
        <div className="ml-[27px] w-[13px] h-[14px] bg-[#ffff00] text-[10px] leading-[14px] text-center text-[#333]">下</div>
        <div className="ml-[4px] w-[15px] h-[14px] bg-[#00ff00] text-[10px] leading-[14px] text-center text-[#e00000]">ϟ</div>
        <div className="ml-[5px] w-[12px] h-[14px] bg-[#0000ff] text-[8px] leading-[14px] text-center text-[#ffff00]">▲</div>
      </div>
      <div className="h-[23px] flex items-center pl-[2px] gap-[10px] text-[14px] leading-none border-b border-[#5a3520] shrink-0">
        <div className="w-[110px] flex justify-between"><span className={Lb}>委比</span><span className={R}>33.33%</span></div>
        <div className="w-[120px] flex justify-between"><span className={Lb}>委差</span><span className={R}>1</span></div>
      </div>
      <div className="h-[24px] flex items-center border-b border-[#5a3520] shrink-0">
        <div className={`w-[30px] h-full flex items-center justify-center border-r border-[#5a3520] text-[14px] ${Cy}`}>卖</div>
        <div className={`ml-[34px] w-[120px] text-[18px] font-bold ${R}`}>5343.2</div>
        <div className={`text-[18px] font-bold ${Cy}`}>1</div>
      </div>
      <div className="h-[25px] flex items-center border-b border-[#5a3520] shrink-0">
        <div className={`w-[30px] h-full flex items-center justify-center border-r border-[#5a3520] text-[14px] ${R}`}>买</div>
        <div className={`ml-[34px] w-[120px] text-[18px] font-bold ${R}`}>5343.0</div>
        <div className={`text-[18px] font-bold ${R}`}>2</div>
      </div>
      <div className="h-[173px] pt-[2px] border-b border-[#5a3520] shrink-0">
        <QRow a="最新" av="5343.6" ac={R} b="均价" bv="5324.2" bc={R} />
        <QRow a="涨跌" av="94.0" ac={R} b="前结" bv="5249.6" bc={Wh} />
        <QRow a="幅度" av="+1.79%" ac={R} b="今开" bv="5283.4" bc={R} />
        <QRow a="振幅" av="1.52%" ac={Wh} b="最高" bv="5355.0" bc={R} />
        <QRow a="总手" av="81740" ac={Ol} b="最低" bv="5275.2" bc={R} />
        <QRow a="金额" av="870亿" ac="text-[#20c8f0]" b="量比" bv="0.94" bc={Wh} />
        <QRow a="持仓" av="114670" ac={Ol} b="增仓" bv="-1215" bc={Ol} />
        <QRow a="涨停" av="5774.4" ac={R} b="跌停" bv="4724.8" bc={Cy} />
        <QRow a="总笔" av="20284" ac={Ol} b="均量" bv="4" bc={Ol} />
      </div>
      <div className="h-[24px] flex items-center pl-[2px] gap-[10px] text-[14px] leading-none border-b-2 border-[#d00000] shrink-0">
        <div className="w-[110px] flex justify-between"><span className={Lb}>外盘</span><span className={R}>42443</span></div>
        <div className="w-[120px] flex justify-between"><span className={Lb}>内盘</span><span className={Cy}>39297</span></div>
      </div>
      <div className="flex shrink-0">
        <div className="w-[229px] shrink-0">
          {ticks.map((t, i) => (
            <div key={i} className={`h-[19px] flex items-center text-[14px] font-bold leading-none ${i === 30 ? "border-t border-dotted border-[#5a3520]" : ""}`}>
              <div className={`w-[35px] text-right font-bold ${Lb}`}>{t[0]}</div>
              <div className={`w-[76px] text-right tracking-[0.2px] ${R}`}>{t[1]}</div>
              <div className="w-[28px] flex justify-center">
                {t[2] === "d" ? <ArrowDown size={20} strokeWidth={1.3} color="#00c2cc" /> : t[2] === "u" ? <ArrowUp size={20} strokeWidth={1.3} color="#cc0030" /> : null}
              </div>
              <div className={`w-[38px] text-right ${tc[t[4]]}`}>{t[3]}</div>
              <div className={`w-[51px] text-right ${tc[t[6]]}`}>{t[5]}</div>
            </div>
          ))}
        </div>
        <div className="w-[16px] border-l border-r border-[#4b2e1c] flex flex-col justify-between">
          <div className="h-[16px] border-b border-[#4b2e1c] flex items-center justify-center text-[#5a3520] text-[10px]">▲</div>
          <div className="flex flex-col">
            <div className="h-[30px] border border-[#4b2e1c] rounded-[4px] flex flex-col items-center justify-center gap-[2px]">
              <div className="w-[8px] h-[1px] bg-[#4b2e1c]" /><div className="w-[8px] h-[1px] bg-[#4b2e1c]" /><div className="w-[8px] h-[1px] bg-[#4b2e1c]" /><div className="w-[8px] h-[1px] bg-[#4b2e1c]" />
            </div>
            <div className="h-[16px] border-t border-b border-[#4b2e1c] flex items-center justify-center text-[#5a3520] text-[10px]">▼</div>
          </div>
        </div>
      </div>
      <svg width={245} height={19} viewBox="0 0 245 19" className="block shrink-0">
        <rect x={3.5} y={1.5} width={30} height={14} fill="none" stroke="#4b2e1c" />
        <line x1={18.5} x2={18.5} y1={1} y2={16} stroke="#4b2e1c" />
        <polygon points="14,4 14,13 8,8.5" fill="#5a3520" />
        <polygon points="23,4 23,13 29,8.5" fill="#5a3520" />
        <polyline points="34,15 37,16 37,15 40,0 240,0 233,16" fill="none" stroke="#4b2e1c" />
        {[["细",46],["势",72],["盘",98],["价",125],["逆",151],["成",177]].map(([t, x]) => (
          <text key={t as string} x={x as number} y={13} fontSize={13} fill="#7a6a55" textAnchor="middle">{t}</text>
        ))}
        {[60, 86, 112, 139, 165].map((x) => <polyline key={x} points={`${x - 4},0 ${x},16 ${x + 4},0`} fill="none" stroke="#4b2e1c" />)}
      </svg>
    </div>
  );
}

function Sidebar() {
  const items = ["8n", "", "5n", "1", "Mn", "3", "5", "10", "15", "30", "时", "Hn", "日", "Dn", "周", "月", "季", "年"];
  return (
    <div className="flex-1 bg-[#f2f2f2] border-l-2 border-white font-['Liberation_Mono','Noto_Sans_CJK_SC',monospace]">
      <div className="h-[31px] border-b border-[#b0b0b0] mx-[3px]" />
      <div className="h-[22px] flex items-center justify-center mt-[7px]">
        <svg width={15} height={12} viewBox="0 0 15 12"><polyline points="0,7 4,4 7,7 13,2" fill="none" stroke="#222" /><line x1={0} x2={15} y1={11} y2={11} stroke="#222" /></svg>
      </div>
      {items.map((t, i) => (
        <div key={i} className="h-[22px] flex items-center justify-center text-[14px] text-[#111]">
          {t === "" ? (
            <svg width={13} height={13} viewBox="0 0 13 13"><rect x={0.5} y={0.5} width={12} height={12} fill="none" stroke="#222" /><polyline points="2,8 5,5 7,7 11,3" fill="none" stroke="#222" /></svg>
          ) : t === "5" ? (
            <div className="w-[22px] h-[21px] border border-[#1f6fb5] flex items-center justify-center">5</div>
          ) : t}
        </div>
      ))}
      <div className="h-[14px] border-b border-[#b0b0b0] flex items-center pl-[6px] text-[8px] text-[#111]">◀</div>
    </div>
  );
}

function Hdr({ children, className }: { children: React.ReactNode; className?: string }) {
  return <div className={`absolute left-[3px] whitespace-pre leading-none ${className ?? ""}`}>{children}</div>;
}

function ChartCol() {
  const Br = "text-[#7a6a55]";
  return (
    <div className="w-[1647px] shrink-0 border-t border-l border-[#d00000] flex flex-col">
      <div className="relative h-[362px] shrink-0">
        <MainChart />
        <Hdr className="top-[5px] left-[6px] text-[12.3px]">
          <span className="text-[#ff0000] font-bold">$ </span>
          <span className={Br}>500股指连续(5分 复权) 20/05/26 15:00 </span>
          <span className="text-[#00d8e8]">开5343.2↓</span><span className="text-[#ff0000]">高5344.8↓</span><span className="text-[#00d8e8]">低5338.8↓</span><span className="text-[#ff0000]">收5343.6↑</span>
          <span className="text-[#c8c8c8]">换2.97% </span><span className="text-[#c8c800]">量3409 </span><span className="text-[#00d8e8]">额36.4亿 </span><span className="text-[#c8c800]">持114670 </span><span className="text-[#c8c8c8]">振0.11% </span><span className="text-[#a00000]">涨(0.2)0.00%</span>
        </Hdr>
        <Hdr className="top-[19px] text-[12.3px]">
          <span className={Br}>cyh80(60,60,3) </span><span className="text-[#00ff00]">顶部B:5355 </span><span className="text-[#ff00ff]"> 底部S:5235.2 </span><span className="text-[#ff0000]"> MA5:5346.04↑</span><span className="text-[#00ff00]">MA10:5340.48↑</span><span className="text-[#c8c8c8]">MA20:5336.47↑</span><span className="text-[#00d8ff]">MA60:5312.647↑</span>
        </Hdr>
      </div>
      {[
        { h: "h-[161px]", c: <Pane2 />, t: (
          <Hdr className="top-[2px] text-[14px] tracking-[0.1px]">
            <span className={Br}>qsdd36101v </span><span className="text-[#7a4a10]">长期线10:94.546 </span><span className="text-[#ffff00]"> 长期线5:84.338↓</span><span className="text-[#ffffff]">中期线:35.156↓</span><span className="text-[#ff00ff]">中期线01:76.38↓</span>
          </Hdr>) },
        { h: "h-[118px]", c: <Pane3 />, t: (
          <Hdr className="top-[3px] text-[12.5px]">
            <span className={Br}>kpj51015 </span><span className="text-[#e00000]">KPJ5:733.193 </span><span className="text-[#ffff00]">KPJ10:691.395 </span><span className="text-[#6a4010]">KPJ15:686.159</span>
          </Hdr>) },
        { h: "h-[99px]", c: <Pane4 />, t: (
          <Hdr className="top-[3px] text-[12px]"><span className={Br}>pys2 </span><span className="text-[#00c000]">PSY3分:58.333↓</span></Hdr>) },
        { h: "h-[63px]", c: <Pane5 />, t: (
          <Hdr className="top-[3px] text-[12.3px]">
            <span className={Br}>zkpx05560 </span><span className="text-[#e00000]">DK:7358↑</span><span className="text-[#ff00ff]">KP:0 </span><span className="text-[#00ff00]"> KK:4594 </span><span className="text-[#ffff00]"> DP:0 </span><span className="text-[#ff00ff]"> DKKP:7358↑</span><span className="text-[#ffff00]">KKDP:4594</span>
            <span className="text-[#e00000] ml-[95px]">净多单:64634</span><span className="text-[#00e000] ml-[51px]">净空单:0</span>
          </Hdr>) },
        { h: "h-[100px]", c: <Pane6 />, t: (
          <Hdr className="top-[3px] text-[12.3px]">
            <span className={Br}>zkpx0552 </span><span className="text-[#e00000]">DK:73.58↑</span><span className="text-[#ff00ff]">KP:0 </span><span className="text-[#00ff00]"> KK:45.94 </span><span className="text-[#ffff00]"> DP:0 </span><span className="text-[#ff00ff]"> DKKP:73.58↑</span><span className="text-[#ffff00]">KKDP:45.94 </span><span className="text-[#ff00ff] tracking-[-2.2px]"> MMMMMMMMMMMMMMMMMMMMM</span><span className="text-[#ff00ff]">:0 </span><span className="text-[#e00000]"> JDK:0.193↑</span><span className="text-[#ff00ff]">JKP:0 </span><span className="text-[#00e000]"> JKK:0↓</span><span className="text-[#ffff00]">JDP:0</span>
          </Hdr>) },
      ].map((p, i) => (
        <div key={i} className={`relative ${p.h} shrink-0 border-t border-[#d00000] overflow-hidden`}>
          {p.c}
          {p.t}
        </div>
      ))}
    </div>
  );
}

function TabBar() {
  const tabs: [string, string, boolean][] = [
    ["中金所", "w-[53px]", false], ["国内商品", "w-[81px]", true], ["期权", "w-[43px]", false], ["上海证券", "w-[79px]", true], ["深圳证券", "w-[80px]", true], ["恒指期货", "w-[70px]", false], ["新加坡市场", "w-[81px]", false], ["A股板块", "w-[65px]", false], ["外汇", "w-[43px]", false], ["伦敦LME", "w-[71px]", false], ["CBOT粮油", "w-[78px]", false], ["NYME能源", "w-[82px]", false], ["日本期货", "w-[69px]", false], ["棕榈油", "w-[56px]", false], ["NYBOT商品", "w-[88px]", false], ["全球指数", "w-[69px]", false], ["芝加哥CME", "w-[85px]", false], ["其他金融期货", "w-[104px]", true],
  ];
  return (
    <div className="h-[29px] flex shrink-0 bg-[#eeeeee] pt-[2px] border-t-2 border-white">
      <div className="flex pl-[6px] h-[27px] w-[1337px] bg-[#f0f0f0] border-b-2 border-r border-[#a8a8a8] items-center shrink-0">
        {tabs.map(([t, w, c], i) => (
          <div key={t} className={`${w} h-[23px] ${i === 17 ? "" : "border-r border-[#a8a8a8]"} flex items-center justify-center gap-[6px] text-[13px] text-[#1a1a1a] shrink-0 whitespace-nowrap`}>
            {t}{c ? <Caret /> : null}
          </div>
        ))}
        <Settings size={15} strokeWidth={1.4} color="#444" className="ml-[1px]" />
        <span className="ml-[10px] mt-[8px]"><Caret /></span>
      </div>
      <div className="ml-[213px] w-[170px] h-[24px] bg-[#ebedee] text-[#e0e2e3] text-[13px] pl-[32px] flex items-center">矩形截图(R)</div>
    </div>
  );
}

function PriceBar({ w, red, sm }: { w: string; red: string; sm: string }) {
  return (
    <div className={`${w} shrink-0 flex flex-col`}>
      <div className="h-[11px] flex border border-black mt-[0px] w-full">
        <div className={`${red} bg-[#ff0000] border-r border-black`} />
        <div className="flex-1 bg-[#148000]" />
      </div>
      <div className={`${sm} h-[5px] bg-[#148000] mt-[2px]`} />
    </div>
  );
}

function StatusBar() {
  const G = "text-[#1a8a00]";
  const BoxCls = "w-[27px] h-[21px] border-t-2 border-r border-l border-[#a8a8a8] bg-white flex items-center justify-center shrink-0";
  return (
    <div className="h-[23px] bg-[#eeeeee] flex shrink-0 text-[14px] leading-none text-[#1a1a1a] whitespace-nowrap">
      <div className="ml-[2px] w-[1590px] h-full bg-white border-t-2 border-l border-[#a8a8a8] flex items-start pt-[3px] shrink-0">
        <div className="w-[22px] pl-[4px] pt-[3px] shrink-0">沪</div>
        <div className={`w-[48px] pt-[3px] ${G}`}>2976.5</div>
        <div className={`w-[50px] pt-[3px] ${G}`}>-2.75%</div>
        <div className={`w-[55px] pt-[3px] ${G}`}>(-84.22)</div>
        <div className="w-[49px] pt-[3px]">3275亿</div>
        <PriceBar w="w-[149px]" red="w-[74px]" sm="w-[10px]" />
        <div className="w-[28px]" />
        <div className="w-[18px] pt-[3px]">深</div>
        <div className={`w-[46px] pt-[3px] ${G}`}>10682</div>
        <div className={`w-[50px] pt-[3px] ${G}`}>-3.52%</div>
        <div className={`w-[61px] pt-[3px] ${G}`}>(-390.16)</div>
        <div className="w-[50px] pt-[3px]">4815亿</div>
        <PriceBar w="w-[149px]" red="w-[74px]" sm="w-[10px]" />
        <div className="w-[23px]" />
        <div className="w-[59px] pt-[3px]">沪深300</div>
        <div className={`w-[48px] pt-[3px] ${G}`}>4003.9</div>
        <div className={`w-[50px] pt-[3px] ${G}`}>-3.10%</div>
        <div className={`w-[62px] pt-[3px] ${G}`}>(-128.03)</div>
        <div className="w-[51px] pt-[3px]">2504亿</div>
        <PriceBar w="w-[116px]" red="w-[58px]" sm="w-[6px]" />
        <div className="ml-[11px] pt-[3px]">无法显示市场信息</div>
      </div>
      <div className="ml-[3px] w-[83px] h-full bg-white border-t-2 border-x border-[#a8a8a8] shrink-0" />
      <div className="flex gap-[3px] ml-[3px]">
        <div className={BoxCls}><FaPython size={16} color="#111" /></div>
        <div className={BoxCls}><svg width={12} height={16} viewBox="0 0 12 16"><rect x={0} y={2} width={12} height={13} rx={2} fill="#8c0a0a" /><ellipse cx={6} cy={2.5} rx={6} ry={2} fill="#f0f0f0" stroke="#8c0a0a" /></svg></div>
        <div className={BoxCls}><Globe size={15} color="#1060b0" fill="#50c8d8" /></div>
        <div className={BoxCls}><Bell size={14} color="#444" fill="#c0c0c0" /></div>
        <div className={BoxCls}><Mail size={15} color="#555" fill="#e8d850" /></div>
        <div className={BoxCls}><svg width={13} height={15} viewBox="0 0 13 15"><polygon points="3,1 13,0 13,12 10,15 0,15 0,4" fill="#a8a8a8" stroke="#666" /><rect x={4} y={7} width={3} height={1} fill="#333" /><rect x={4} y={11} width={3} height={1} fill="#333" /></svg></div>
      </div>
      <div className="ml-[3px] flex-1 h-full border-t-2 border-l border-[#a8a8a8] bg-[#f0f0f0] pt-[4px] pl-[1px] text-[15px] text-[#1b3d66]">07:33:12</div>
    </div>
  );
}

export default function App() {
  return (
    <div className="w-[1920px] h-[1047px] overflow-hidden flex flex-col bg-[#eeeeee] font-['Liberation_Sans','Noto_Sans_CJK_SC',sans-serif]">
      <TitleBar />
      <Toolbar />
      <MenuBar />
      <div className="h-[904px] flex shrink-0">
        <div className="w-[1895px] flex bg-black overflow-hidden shrink-0">
          <ChartCol />
          <RightPanel />
        </div>
        <Sidebar />
      </div>
      <TabBar />
      <StatusBar />
      <div className="flex-1 bg-[#232e36] flex">
        <div className="ml-[400px] w-[49px] bg-[#4f5c64]" />
      </div>
    </div>
  );
}
